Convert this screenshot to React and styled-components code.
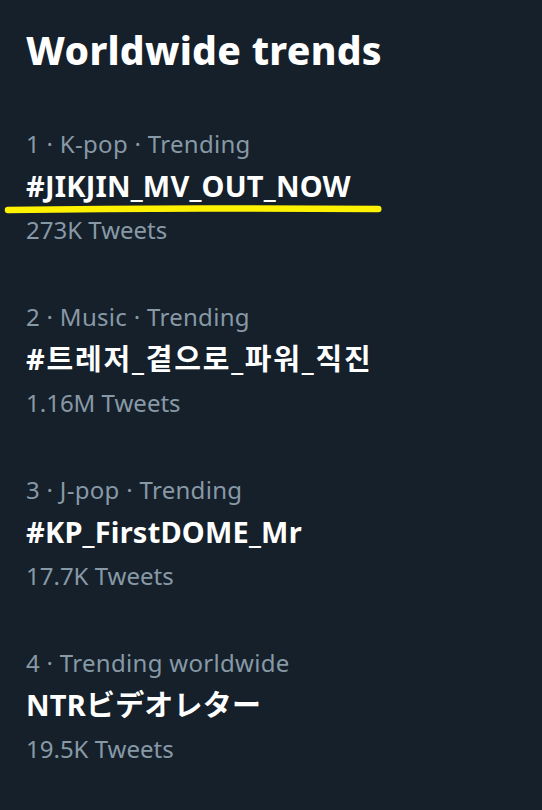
import styled, { createGlobalStyle } from "styled-components";

const GlobalStyle = createGlobalStyle`
  html, body {
    margin: 0;
    padding: 0;
    background: #15202b;
  }
  body {
    font-family: "Noto Sans", "Noto Sans CJK KR", "Noto Sans CJK JP", sans-serif;
  }
`;

const Panel = styled.div`
  width: 542px;
  height: 810px;
  background: #15202b;
  box-sizing: border-box;
  padding: 24px 0 0 26px;
  overflow: hidden;
`;

const Heading = styled.h1`
  margin: 0;
  font-size: 39px;
  font-weight: 800;
  line-height: 52px;
  color: #ffffff;
  letter-spacing: 0.3px;
`;

const TrendList = styled.div`
  display: flex;
  flex-direction: column;
  gap: 44px;
  margin-top: 48px;
`;

const Trend = styled.div`
  position: relative;
  display: flex;
  flex-direction: column;
`;

const Meta = styled.div`
  font-size: 24px;
  line-height: 40px;
  color: #8899a6;
  letter-spacing: 0.3px;
`;

const Title = styled.div`
  font-size: 29px;
  font-weight: 700;
  line-height: 43px;
  color: #ffffff;
  letter-spacing: ${(p) => (p.$lang === "ko" ? "1.8px" : "0.2px")};
  font-family: "Noto Sans", ${(p) => (p.$lang === "ja" ? '"Noto Sans CJK JP"' : '"Noto Sans CJK KR"')}, sans-serif;
`;

const Count = styled.div`
  font-size: 24px;
  line-height: 46px;
  color: #8899a6;
`;

const Highlight = styled.svg`
  position: absolute;
  left: -22px;
  top: 79px;
  width: 378px;
  height: 12px;
  pointer-events: none;
`;

const trends = [
  { rank: 1, meta: "K-pop · Trending", title: "#JIKJIN_MV_OUT_NOW", count: "273K Tweets", marked: true },
  { rank: 2, meta: "Music · Trending", title: "#트레저_곁으로_파워_직진", count: "1.16M Tweets", lang: "ko" },
  { rank: 3, meta: "J-pop · Trending", title: "#KP_FirstDOME_Mr", count: "17.7K Tweets" },
  { rank: 4, meta: "Trending worldwide", title: "NTRビデオレター", count: "19.5K Tweets", lang: "ja" },
];

export default function App() {
  return (
    <>
      <GlobalStyle />
      <Panel>
        <Heading>Worldwide trends</Heading>
        <TrendList>
          {trends.map((t) => (
            <Trend key={t.rank}>
              <Meta>{t.rank} · {t.meta}</Meta>
              <Title $lang={t.lang}>{t.title}</Title>
              <Count>{t.count}</Count>
              {t.marked && (
                <Highlight viewBox="0 0 378 12">
                  <path d="M4 7 Q120 5 250 5.5 T374 6" stroke="#fff200" strokeWidth="6.5" strokeLinecap="round" fill="none" />
                </Highlight>
              )}
            </Trend>
          ))}
        </TrendList>
      </Panel>
    </>
  );
}
